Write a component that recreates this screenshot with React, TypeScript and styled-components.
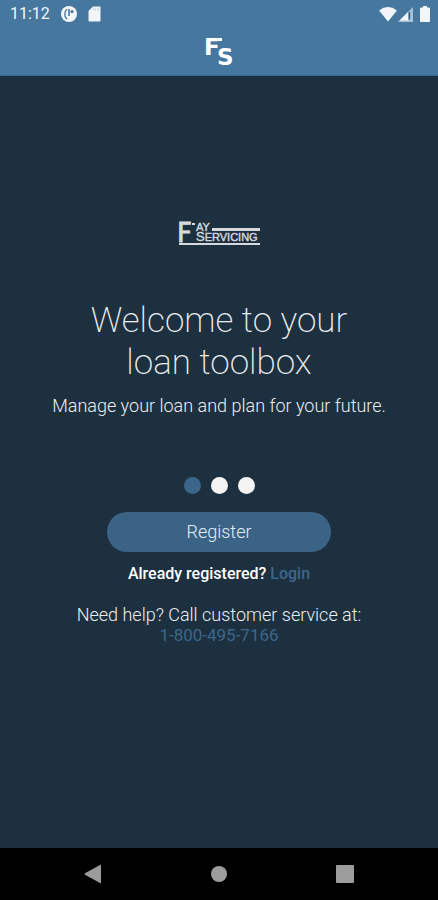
import React from "react";
import styled, { createGlobalStyle } from "styled-components";

const GlobalStyle = createGlobalStyle`
  * { box-sizing: border-box; }
  body {
    margin: 0;
    background: #1d303f;
    font-family: Roboto, "Liberation Sans", sans-serif;
  }
`;

const Screen = styled.div`
  min-height: 100vh;
  display: flex;
  flex-direction: column;
  background: #1d303f;
  color: #eceef0;
`;

const Header = styled.header`
  background: #45779f;
  padding-bottom: 8px;
  border-bottom: 1px solid #3c6789;
`;

const StatusBar = styled.div`
  height: 28px;
  padding: 0 8px 0 10px;
  display: flex;
  align-items: center;
  justify-content: space-between;
  color: #f2f6f9;
`;

const StatusGroup = styled.div<{ $gap: number }>`
  display: flex;
  align-items: center;
  gap: ${(p) => p.$gap}px;
`;

const Clock = styled.time`
  font-size: 16px;
  line-height: 28px;
`;

const Brand = styled.div`
  display: flex;
  justify-content: center;
  padding-top: 8px;

  svg { display: block; overflow: visible; }
`;

const Main = styled.main`
  flex: 1;
  display: flex;
  flex-direction: column;
  align-items: center;
  padding: 144px 16px 16px;
  text-align: center;

  > svg { overflow: visible; }
`;

const Title = styled.h1`
  margin: 53px 0 0;
  max-width: 300px;
  font-size: 35px;
  line-height: 42px;
  font-weight: 200;
`;

const Tagline = styled.p`
  margin: 11px 0 0;
  font-size: 18px;
  line-height: 22px;
  font-weight: 300;
`;

const Dots = styled.div`
  display: flex;
  gap: 10px;
  margin-top: 60px;
`;

const Dot = styled.button<{ $active?: boolean }>`
  width: 17px;
  height: 17px;
  padding: 0;
  border: 0;
  border-radius: 50%;
  background: ${(p) => (p.$active ? "#3b6589" : "#f3f3f4")};
`;

const RegisterButton = styled.button`
  width: 55%;
  min-width: 223px;
  height: 40px;
  margin-top: 18px;
  padding: 0;
  border: 0;
  border-radius: 20px;
  background: #3a6386;
  color: #e3eef7;
  font-family: inherit;
  font-size: 18px;
  font-weight: 300;
  line-height: 40px;
`;

const LoginLine = styled.p`
  margin: 12px 0 0;
  font-size: 16px;
  line-height: 20px;
  font-weight: 500;
  color: #ffffff;
`;

const Help = styled.p`
  margin: 20px 0 0;
  font-size: 18px;
  line-height: 21px;
  font-weight: 300;
`;

const TextLink = styled.a`
  color: #3b678c;
  text-decoration: none;
`;

const PhoneLink = styled(TextLink)`
  display: block;
  font-size: 17px;
  font-weight: 400;
`;

const NavBar = styled.nav`
  height: 52px;
  background: #000000;
  display: flex;
  align-items: center;
  justify-content: center;
  gap: 102px;
`;

const NavButton = styled.button`
  width: 24px;
  height: 24px;
  padding: 0;
  border: 0;
  background: none;
  color: #9c9c9c;

  svg { display: block; }
`;

function AppBadgeIcon() {
  return (
    <svg width="16" height="16" viewBox="0 0 16 16" aria-hidden="true">
      <circle cx="8" cy="8" r="8" fill="currentColor" />
      <path d="M6.2 12.8C4 11.8 3.6 9.4 4 6.6C4.3 4.6 5.2 3.6 6.2 3.4" fill="none" stroke="#45779f" strokeWidth="1.3" />
      <path d="M8 3V10" stroke="#45779f" strokeWidth="1.6" />
      <circle cx="11" cy="5.6" r="1.6" fill="#45779f" />
    </svg>
  );
}

function CardIcon() {
  return (
    <svg width="13" height="16" viewBox="0 0 13 16" aria-hidden="true">
      <path d="M5 0.5H11.5Q12.5 0.5 12.5 1.5V14.5Q12.5 15.5 11.5 15.5H1.5Q0.5 15.5 0.5 14.5V5Z" fill="currentColor" />
      <path d="M5.3 2.5V4.5M7.6 2.5V4.5M9.9 2.5V4.5" stroke="#b4cadb" strokeWidth="1" />
    </svg>
  );
}

function WifiIcon() {
  return (
    <svg width="18" height="15" viewBox="0 0 18 15" aria-hidden="true">
      <path d="M0 3.5Q9-3.3 18 3.5L9 14.5Z" fill="currentColor" />
    </svg>
  );
}

function SignalIcon() {
  return (
    <svg width="15" height="15" viewBox="0 0 15 15" aria-hidden="true">
      <path d="M15 0V15H0Z" fill="#a9c2d5" />
      <path d="M10 5V13.5H1.5L0 15Z" fill="currentColor" />
      <path d="M11.4 5V12.5" stroke="#315f83" strokeWidth="1.5" />
    </svg>
  );
}

function BatteryIcon() {
  return (
    <svg width="10" height="16" viewBox="0 0 10 16" aria-hidden="true">
      <path d="M3 0H7V1.5H9Q10 1.5 10 2.5V15Q10 16 9 16H1Q0 16 0 15V2.5Q0 1.5 1 1.5H3Z" fill="currentColor" />
    </svg>
  );
}

function MonogramLogo() {
  return (
    <svg width="28" height="31" viewBox="0 0 28 31" role="img" aria-label="FS" fill="#ffffff">
      <text x="-1" y="19" fontFamily="DejaVu Sans, sans-serif" fontWeight="700" fontSize="23">F</text>
      <rect x="13" y="2" width="4" height="3" />
      <text x="12" y="29" fontFamily="DejaVu Sans, sans-serif" fontWeight="700" fontSize="23" stroke="#45779f" strokeWidth="2" paintOrder="stroke">S</text>
    </svg>
  );
}

function FayLogo() {
  return (
    <svg width="81" height="27" viewBox="0 0 81 27" role="img" aria-label="Fay Servicing" fill="#d6dade">
      <g fontFamily="DejaVu Sans, sans-serif" stroke="#d6dade">
        <text x="-2" y="22" fontSize="26" strokeWidth="0.8">F</text>
        <text x="17" y="11" fontSize="11" strokeWidth="0.4">AY</text>
        <text x="17" y="21" fontSize="13" fontFamily="Liberation Sans, sans-serif" strokeWidth="0.4">
          S<tspan fontSize="11">ERVICING</tspan>
        </text>
      </g>
      <rect x="13" y="3" width="3" height="2" />
      <rect x="33" y="8" width="48" height="3" />
      <rect x="0" y="23" width="81" height="2" />
    </svg>
  );
}

export default function App() {
  return (
    <Screen>
      <GlobalStyle />
      <Header>
        <StatusBar>
          <StatusGroup $gap={11}>
            <Clock>11:12</Clock>
            <AppBadgeIcon />
            <CardIcon />
          </StatusGroup>
          <StatusGroup $gap={1}>
            <WifiIcon />
            <StatusGroup $gap={7}>
              <SignalIcon />
              <BatteryIcon />
            </StatusGroup>
          </StatusGroup>
        </StatusBar>
        <Brand>
          <MonogramLogo />
        </Brand>
      </Header>
      <Main>
        <FayLogo />
        <Title>Welcome to your loan toolbox</Title>
        <Tagline>Manage your loan and plan for your future.</Tagline>
        <Dots>
          <Dot $active aria-label="Slide 1" />
          <Dot aria-label="Slide 2" />
          <Dot aria-label="Slide 3" />
        </Dots>
        <RegisterButton>Register</RegisterButton>
        <LoginLine>
          Already registered? <TextLink href="#login">Login</TextLink>
        </LoginLine>
        <Help>
          Need help? Call customer service at:
          <PhoneLink href="tel:18004957166">1-800-495-7166</PhoneLink>
        </Help>
      </Main>
      <NavBar>
        <NavButton aria-label="Back">
          <svg width="24" height="24" viewBox="0 0 24 24">
            <path d="M20 3.5V20.5Q20 21.5 19 21L4 12.7Q3 12 4 11.3L19 3Q20 2.5 20 3.5Z" fill="currentColor" />
          </svg>
        </NavButton>
        <NavButton aria-label="Home">
          <svg width="24" height="24" viewBox="0 0 24 24">
            <circle cx="12" cy="12" r="8" fill="currentColor" />
          </svg>
        </NavButton>
        <NavButton aria-label="Recents">
          <svg width="24" height="24" viewBox="0 0 24 24">
            <rect x="3" y="3" width="18" height="18" rx="1" fill="currentColor" />
          </svg>
        </NavButton>
      </NavBar>
    </Screen>
  );
}
